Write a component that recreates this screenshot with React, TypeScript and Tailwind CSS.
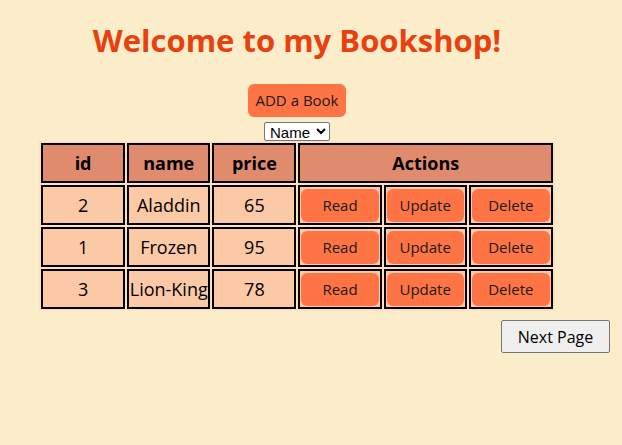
import React from 'react'

type Book = { id: number; name: string; price: number }

const books: Book[] = [
  { id: 2, name: 'Aladdin', price: 65 },
  { id: 1, name: 'Frozen', price: 95 },
  { id: 3, name: 'Lion-King', price: 78 },
]

const comic = { fontFamily: '"Comic Sans MS", "Open Sans", sans-serif' }

const ActionButton: React.FC<{ label: string }> = ({ label }) => (
  <button className="w-full h-[33px] rounded-md bg-[#ff7444] text-[15px] text-[#1a1a1a]">
    {label}
  </button>
)

const App: React.FC = () => {
  return (
    <div className="min-h-[445px] w-[622px] bg-[#fbedca] text-black" style={comic}>
      {/* Header */}
      <div className="w-[594px] flex flex-col items-center">
        <h1 className="mt-[18px] h-[44px] leading-[44px] text-[31px] font-bold text-[#e8410f]">
          Welcome to my Bookshop!
        </h1>

        <button className="mt-[22px] h-[33px] w-[98px] rounded-md bg-[#ff7444] text-[15px] text-[#1a1a1a]">
          ADD a Book
        </button>

        <select
          className="mt-[5px] h-[19px] w-[66px] border border-[#767676] rounded-[2px] bg-white text-[15px] leading-none px-px"
          style={{ fontFamily: '"Liberation Sans", Arial, sans-serif' }}
        >
          <option>Name</option>
          <option>Price</option>
        </select>

        {/* Books table */}
        <table className="table-fixed w-[516px] border-separate border-spacing-[2px] bg-[#fde0c2] text-[18px]">
          <colgroup>
            <col className="w-[84px]" />
            <col className="w-[83px]" />
            <col className="w-[84px]" />
            <col className="w-[83px]" />
            <col className="w-[83px]" />
            <col className="w-[84px]" />
          </colgroup>
          <thead>
            <tr className="h-[40px]">
              <th className="border-2 border-black bg-[#e08b6e]">id</th>
              <th className="border-2 border-black bg-[#e08b6e]">name</th>
              <th className="border-2 border-black bg-[#e08b6e]">price</th>
              <th colSpan={3} className="border-2 border-black bg-[#e08b6e]">Actions</th>
            </tr>
          </thead>
          <tbody>
            {books.map((b) => (
              <tr key={b.id} className="h-[40px]">
                <td className="border-2 border-black bg-[#fbc9a6] text-center">{b.id}</td>
                <td className="border-2 border-black bg-[#fbc9a6] text-center whitespace-nowrap">{b.name}</td>
                <td className="border-2 border-black bg-[#fbc9a6] text-center">{b.price}</td>
                <td className="border-2 border-black bg-[#fbc9a6] p-px"><ActionButton label="Read" /></td>
                <td className="border-2 border-black bg-[#fbc9a6] p-px"><ActionButton label="Update" /></td>
                <td className="border-2 border-black bg-[#fbc9a6] p-px"><ActionButton label="Delete" /></td>
              </tr>
            ))}
          </tbody>
        </table>
      </div>

      <div className="flex justify-end pr-[12px] mt-[9px]">
        <button className="h-[33px] w-[109px] border border-[#767676] rounded-[2px] bg-[#efefef] text-[16px]">
          Next Page
        </button>
      </div>
    </div>
  )
}

export default App
